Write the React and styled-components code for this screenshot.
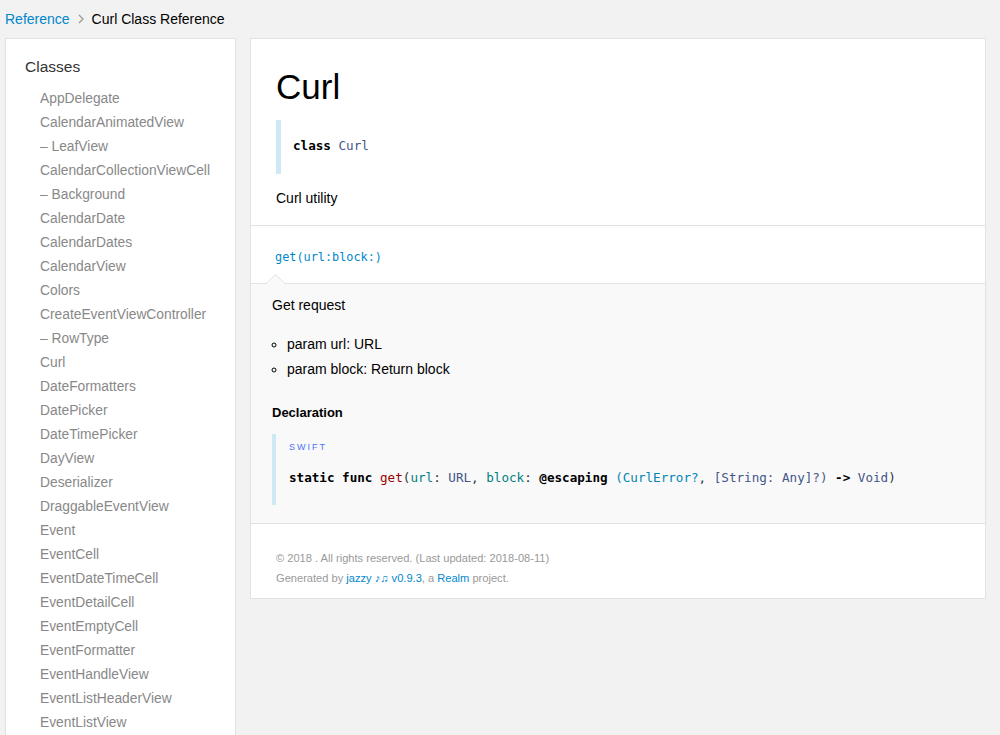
import React from "react";
import styled, { createGlobalStyle } from "styled-components";

const GlobalStyle = createGlobalStyle`
    body {
        margin: 0;
        background: #f2f2f2;
        font-family: "Liberation Sans", Arial, sans-serif;
        color: #000;
    }
`;

const Breadcrumbs = styled.div`
    height: 38px;
    display: flex;
    align-items: center;
    padding-left: 5px;
    font-size: 14px;
    gap: 6px;
`;
const Crumb = styled.a`
    color: #0088cc;
    text-decoration: none;
`;
const Chevron = styled.svg`
    width: 8px;
    height: 10px;
    margin: 0 1px;
`;

const Layout = styled.div`
    display: flex;
    align-items: flex-start;
    padding-left: 5px;
    gap: 14px;
`;

const Nav = styled.nav`
    width: 229px;
    background: #fff;
    border: 1px solid #e2e2e2;
    padding: 15px 0 20px;
`;
const GroupName = styled.div`
    font-size: 15.5px;
    color: #333;
    padding-left: 19px;
    line-height: 26px;
`;
const Tasks = styled.ul`
    list-style: none;
    margin: 7px 0 0;
    padding: 0 0 0 34px;
`;
const Task = styled.li`
    font-size: 13.8px;
    line-height: 24px;
    color: #888;
    white-space: nowrap;
`;

const Main = styled.main`
    width: 734px;
    background: #fff;
    border: 1px solid #e2e2e2;
`;
const Intro = styled.section`
    padding: 27px 25px 17px;
    border-bottom: 1px solid #e2e2e2;
`;
const Title = styled.h1`
    margin: 0;
    font-size: 35px;
    font-weight: normal;
    line-height: 42px;
`;
const Decl = styled.div`
    margin: 12px 0 14px;
    border-left: 5px solid #cde9f4;
    padding: 0 12px 3px;
    height: 51px;
    display: flex;
    align-items: center;
`;
const Code = styled.code`
    font-family: "DejaVu Sans Mono", "Liberation Mono", monospace;
    font-size: 12.6px;
    color: #333;
    white-space: pre;
`;
const CodeLine = styled(Code).attrs({ as: "div" })`
    margin-top: 18px;
`;
const Text = styled.p`
    margin: 0;
    font-size: 14px;
    line-height: 20px;
`;

const TaskItem = styled.div`
    position: relative;
    padding: 20px 24px 16px;
    border-bottom: 1px solid #e2e2e2;
    line-height: 20px;
`;
const Token = styled.a`
    font-family: "DejaVu Sans Mono", "Liberation Mono", monospace;
    font-size: 11.85px;
    color: #0088cc;
    text-decoration: none;
`;
const Notch = styled.svg`
    position: absolute;
    left: 15px;
    bottom: -1px;
    width: 19px;
    height: 10px;
`;

const Detail = styled.div`
    background: #f9f9f9;
    padding: 11px 21px 18px;
    border-bottom: 1px solid #e2e2e2;
`;
const Params = styled.ul`
    list-style: circle;
    margin: 17px 0 0;
    padding-left: 15px;
    font-size: 14px;
    li {
        line-height: 25px;
    }
`;
const Heading = styled.h4`
    margin: 22px 0 0;
    font-size: 13px;
    line-height: 18px;
`;
const CodeBlock = styled.div`
    margin-top: 12px;
    border-left: 4px solid #cde9f4;
    padding: 8px 13px 20px;
`;
const Lang = styled.div`
    font-size: 9px;
    letter-spacing: 2px;
    color: #4b74f5;
    line-height: 10px;
`;
const Kw = styled.span`
    font-weight: bold;
    color: #000;
`;
const Tok = styled.span`
    color: ${p => p.$c};
`;

const Footer = styled.footer`
    padding: 24px 25px 10px;
    font-size: 11.1px;
    color: #999;
    line-height: 20px;
`;
const FootLink = styled.a`
    color: #0088cc;
    text-decoration: none;
`;

const classes = [
    "AppDelegate", "CalendarAnimatedView", "– LeafView", "CalendarCollectionViewCell",
    "– Background", "CalendarDate", "CalendarDates", "CalendarView", "Colors",
    "CreateEventViewController", "– RowType", "Curl", "DateFormatters", "DatePicker",
    "DateTimePicker", "DayView", "Deserializer", "DraggableEventView", "Event",
    "EventCell", "EventDateTimeCell", "EventDetailCell", "EventEmptyCell",
    "EventFormatter", "EventHandleView", "EventListHeaderView", "EventListView",
];

const TYPE = "#445588";
const VAR = "#008080";
const CLS = "#0086b3";

export default function App() {
    return (
        <>
            <GlobalStyle />
            <Breadcrumbs>
                <Crumb href="#">Reference</Crumb>
                <Chevron viewBox="0 0 8 10">
                    <polyline points="2,1 6,5 2,9" fill="none" stroke="#999" strokeWidth="1.3" />
                </Chevron>
                <span>Curl Class Reference</span>
            </Breadcrumbs>
            <Layout>
                <Nav>
                    <GroupName>Classes</GroupName>
                    <Tasks>
                        {classes.map(c => <Task key={c}>{c}</Task>)}
                    </Tasks>
                </Nav>
                <Main>
                    <Intro>
                        <Title>Curl</Title>
                        <Decl>
                            <Code><Kw>class</Kw> <Tok $c={TYPE}>Curl</Tok></Code>
                        </Decl>
                        <Text>Curl utility</Text>
                    </Intro>
                    <TaskItem>
                        <Token href="#">get(url:block:)</Token>
                        <Notch viewBox="0 0 19 10">
                            <polygon points="0,10 9.5,0.5 19,10" fill="#f9f9f9" />
                            <polyline points="0,9.5 9.5,0.5 19,9.5" fill="none" stroke="#e2e2e2" strokeWidth="1" />
                        </Notch>
                    </TaskItem>
                    <Detail>
                        <Text>Get request</Text>
                        <Params>
                            <li>param url: URL</li>
                            <li>param block: Return block</li>
                        </Params>
                        <Heading>Declaration</Heading>
                        <CodeBlock>
                            <Lang>SWIFT</Lang>
                            <CodeLine>
                                <Kw>static</Kw> <Kw>func</Kw> <Tok $c="#990000">get</Tok>(<Tok $c={VAR}>url</Tok>: <Tok $c={TYPE}>URL</Tok>, <Tok $c={VAR}>block</Tok>: <Kw>@escaping</Kw> <Tok $c={CLS}>(CurlError?</Tok>, <Tok $c={TYPE}>[String: Any]?)</Tok> <Kw>-&gt;</Kw> <Tok $c={TYPE}>Void</Tok>)
                            </CodeLine>
                        </CodeBlock>
                    </Detail>
                    <Footer>
                        <div>© 2018 . All rights reserved. (Last updated: 2018-08-11)</div>
                        <div>Generated by <FootLink href="#">jazzy ♪♫ v0.9.3</FootLink>, a <FootLink href="#">Realm</FootLink> project.</div>
                    </Footer>
                </Main>
            </Layout>
        </>
    );
}
